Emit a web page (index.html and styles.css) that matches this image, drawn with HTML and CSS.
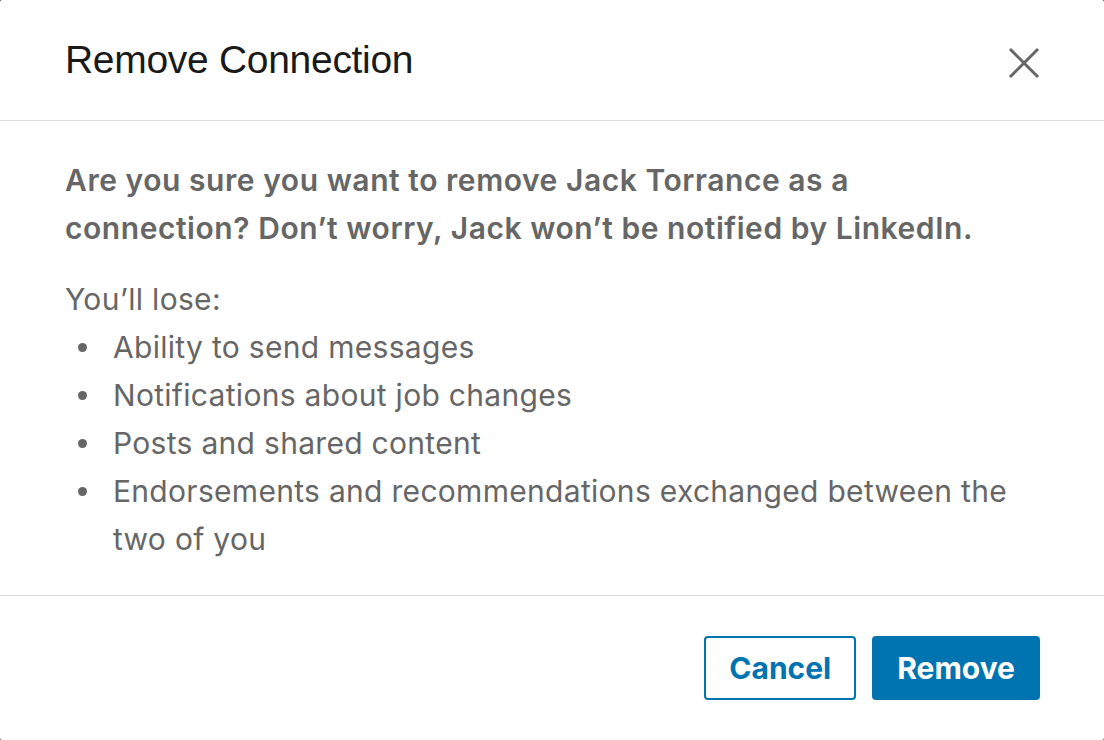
FILE: index.html
```html
<!DOCTYPE html>
<html lang="en">
<head>
<meta charset="utf-8">
<title>Remove Connection</title>
<link rel="stylesheet" href="styles.css">
</head>
<body>
<div class="modal" role="dialog" aria-labelledby="modal-title">
  <header class="modal-header">
    <h2 id="modal-title" class="modal-title">Remove Connection</h2>
    <button class="close-btn" type="button" aria-label="Dismiss">
      <svg width="32" height="32" viewBox="0 0 32 32" aria-hidden="true">
        <path d="M2 2 L30 30 M30 2 L2 30" stroke="#666666" stroke-width="3" stroke-linecap="butt" fill="none"/>
      </svg>
    </button>
  </header>
  <section class="modal-body">
    <p class="confirm">Are you sure you want to remove Jack Torrance as a connection? Don’t worry, Jack won’t be notified by LinkedIn.</p>
    <p class="lose">You’ll lose:</p>
    <ul class="lose-list">
      <li><span>Ability to send messages</span></li>
      <li><span>Notifications about job changes</span></li>
      <li><span>Posts and shared content</span></li>
      <li><span>Endorsements and recommendations exchanged between the two of you</span></li>
    </ul>
  </section>
  <footer class="modal-footer">
    <button class="btn btn-secondary" type="button">Cancel</button>
    <button class="btn btn-primary" type="button">Remove</button>
  </footer>
</div>
</body>
</html>
```

FILE: styles.css
```css
* {
  box-sizing: border-box;
}

html, body {
  margin: 0;
  padding: 0;
  background: #3a3a3a;
}

body {
  width: 1104px;
  height: 740px;
  overflow: hidden;
  font-family: "Inter", "Liberation Sans", sans-serif;
}

.modal {
  display: flex;
  flex-direction: column;
  width: 1104px;
  height: 740px;
  background: #ffffff;
  border-radius: 2px;
  overflow: hidden;
}

.modal-header {
  display: flex;
  align-items: center;
  justify-content: space-between;
  height: 121px;
  padding: 0 64px 0 65px;
  border-bottom: 1px solid #dcdcdc;
}

.modal-title {
  margin: 0;
  font-family: "Liberation Sans", Arial, sans-serif;
  font-weight: 400;
  font-size: 39px;
  letter-spacing: -0.3px;
  color: #191919;
}

.close-btn {
  display: flex;
  align-items: center;
  justify-content: center;
  width: 32px;
  height: 32px;
  padding: 0;
  margin-top: 5px;
  border: 0;
  background: transparent;
}

.modal-body {
  padding: 35px 88px 32px 65px;
  border-bottom: 1px solid #dcdcdc;
  color: #666666;
  font-size: 30px;
  line-height: 48px;
  letter-spacing: 0.3px;
}

.confirm {
  margin: 0 0 23px;
  font-weight: 600;
  letter-spacing: 0.55px;
}

.lose {
  margin: 0;
}

.lose-list {
  margin: 0;
  padding: 0 0 0 13px;
  list-style: none;
}

.lose-list li {
  display: flex;
  align-items: flex-start;
}

.lose-list li::before {
  content: "";
  flex: 0 0 9px;
  width: 9px;
  height: 9px;
  margin: 20px 26px 0 0;
  border-radius: 50%;
  background: #666666;
}

.modal-footer {
  display: flex;
  justify-content: flex-end;
  gap: 16px;
  padding: 40px 64px 40px 0;
}

.btn {
  height: 64px;
  padding: 0 23px;
  border-radius: 4px;
  font-family: "Inter", "Liberation Sans", sans-serif;
  font-size: 30px;
  font-weight: 700;
  cursor: pointer;
}

.btn-secondary {
  border: 2px solid #0073b1;
  background: #ffffff;
  color: #0073b1;
}

.btn-primary {
  border: 2px solid #0073b1;
  background: #0073b1;
  color: #ffffff;
}
```
